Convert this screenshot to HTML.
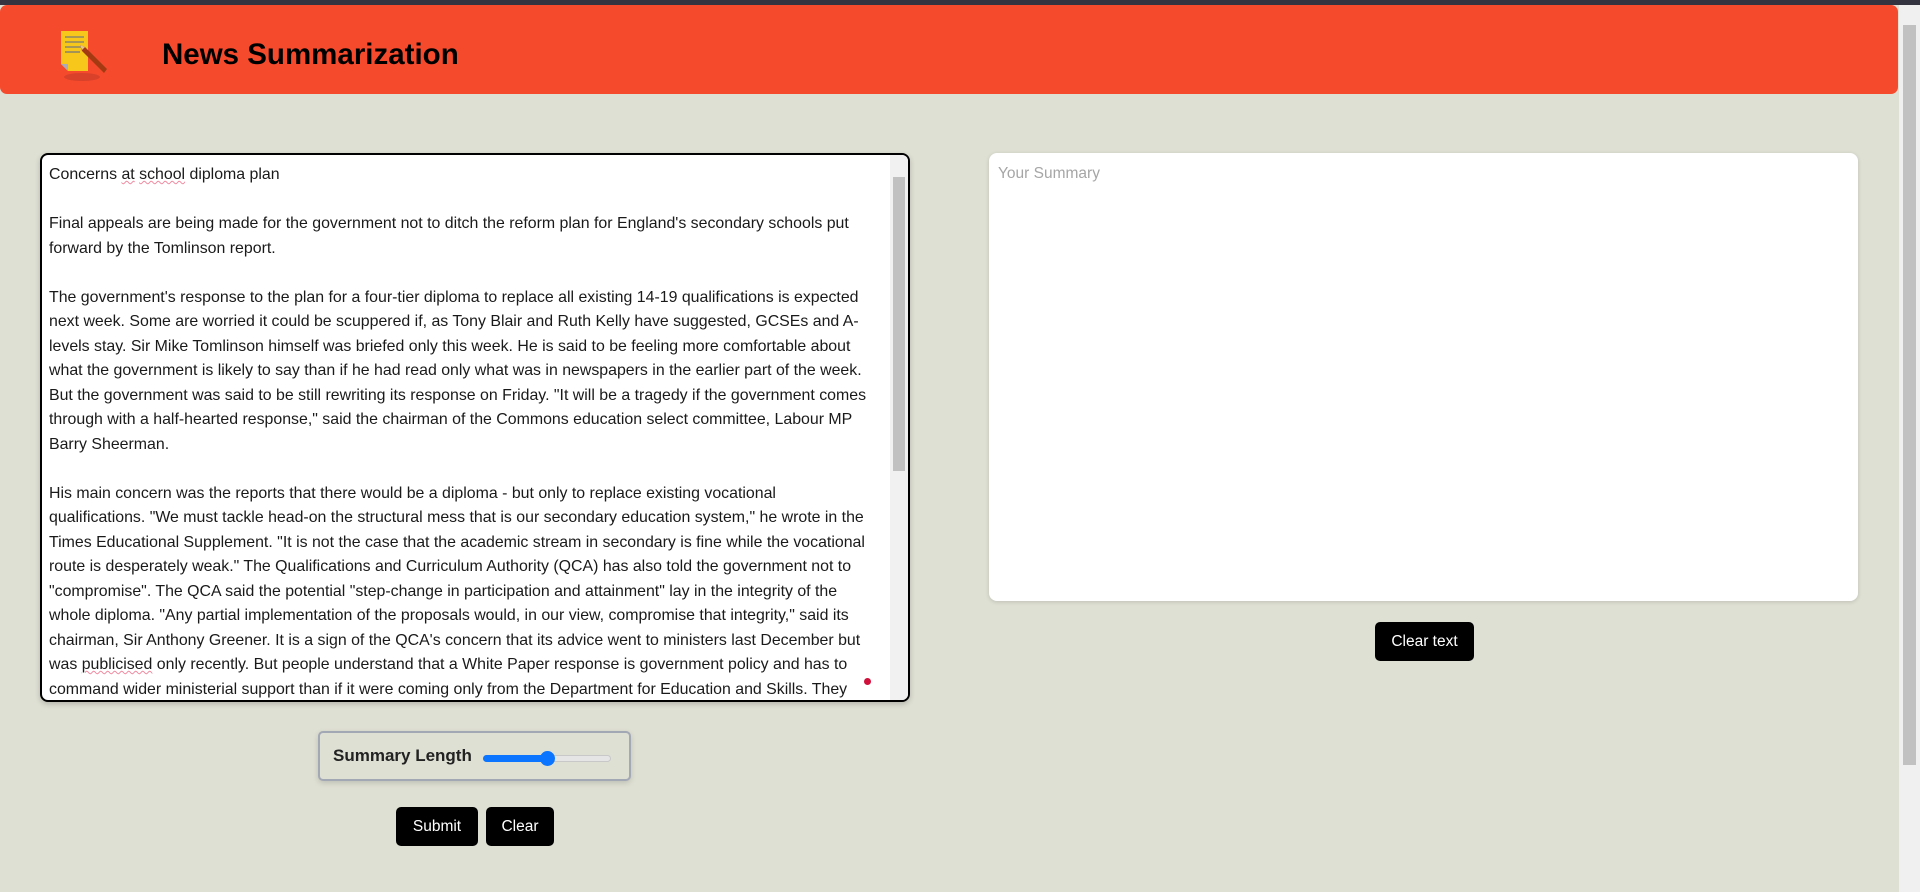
<!DOCTYPE html>
<html><head><meta charset="utf-8">
<style>
*{box-sizing:border-box;margin:0;padding:0}
html,body{width:1920px;height:892px;overflow:hidden;background:#dfe0d4;font-family:"Liberation Sans",sans-serif}
.topbar{position:absolute;left:0;top:0;width:1920px;height:5px;background:#33343f}
.header{position:absolute;left:0;top:5px;width:1898px;height:89px;background:#f64a2d;border-radius:7px}
.title{position:absolute;left:162px;top:33px;font-size:29.5px;font-weight:bold;color:#000}
.vs{position:absolute;right:0;top:5px;width:21px;height:887px;background:#f0f0f0}
.vs .th{position:absolute;left:4px;top:20px;width:13px;height:740px;background:#c1c1c1}
.ta{position:absolute;left:40px;top:153px;width:870px;height:549px;background:#fff;border:2px solid #000;border-radius:8px;overflow:hidden;box-shadow:0 2px 6px rgba(0,0,0,.2)}
.txt{position:absolute;left:7px;top:8px;font-size:15.9px;line-height:24.5px;color:#1a1a1a;white-space:pre}
.u{text-decoration:underline wavy #f08aa0;text-decoration-thickness:1px}
.tsb{position:absolute;right:0;top:0;width:18px;height:100%;background:#f1f1f1}
.tsb .th{position:absolute;left:3px;top:22px;width:12px;height:294px;background:#c1c1c1}
.sum{position:absolute;left:989px;top:153px;width:869px;height:448px;background:#fff;border-radius:8px;box-shadow:0 1px 4px rgba(0,0,0,.15)}
.sum span{position:absolute;left:9px;top:12px;color:#a6a6a6;font-size:15.5px}
.btn{position:absolute;background:#000;color:#fff;font-size:15.5px;border-radius:5px;text-align:center}
.len{position:absolute;left:318px;top:731px;width:313px;height:50px;border:2px solid #a3a8b5;border-radius:5px;background:#dfe0d4;box-shadow:0 2px 6px rgba(0,0,0,.15)}
.len span{position:absolute;left:13px;top:13px;font-size:17px;font-weight:bold;color:#222}
</style></head><body>
<div class="topbar"></div>
<div class="header">
<svg style="position:absolute;left:58px;top:20px" width="55" height="60" viewBox="0 0 55 60">
<ellipse cx="24" cy="52" rx="18" ry="4" fill="#d9412a"/>
<path d="M3 6h27v40H10L3 39z" fill="#f7c81b"/>
<path d="M3 39h7v7z" fill="#aab"/>
<g stroke="#777" stroke-width="1.3"><line x1="7" y1="12" x2="26" y2="12"/><line x1="7" y1="17" x2="26" y2="17"/><line x1="7" y1="22" x2="26" y2="22"/><line x1="7" y1="27" x2="22" y2="27"/></g>
<path d="M22 20l5 2 22 22-3 4-22-22z" fill="#a33a12"/>
<path d="M22 20l5 2-3 3z" fill="#e8c089"/>
</svg>
<div class="title">News Summarization</div>
</div>
<div class="vs"><div class="th"></div></div>

<div class="ta"><div class="txt">Concerns <span class="u">at</span> <span class="u">school</span> diploma plan

Final appeals are being made for the government not to ditch the reform plan for England's secondary schools put
forward by the Tomlinson report.

The government's response to the plan for a four-tier diploma to replace all existing 14-19 qualifications is expected
next week. Some are worried it could be scuppered if, as Tony Blair and Ruth Kelly have suggested, GCSEs and A-
levels stay. Sir Mike Tomlinson himself was briefed only this week. He is said to be feeling more comfortable about
what the government is likely to say than if he had read only what was in newspapers in the earlier part of the week.
But the government was said to be still rewriting its response on Friday. "It will be a tragedy if the government comes
through with a half-hearted response," said the chairman of the Commons education select committee, Labour MP
Barry Sheerman.

His main concern was the reports that there would be a diploma - but only to replace existing vocational
qualifications. "We must tackle head-on the structural mess that is our secondary education system," he wrote in the
Times Educational Supplement. "It is not the case that the academic stream in secondary is fine while the vocational
route is desperately weak." The Qualifications and Curriculum Authority (QCA) has also told the government not to
"compromise". The QCA said the potential "step-change in participation and attainment" lay in the integrity of the
whole diploma. "Any partial implementation of the proposals would, in our view, compromise that integrity," said its
chairman, Sir Anthony Greener. It is a sign of the QCA's concern that its advice went to ministers last December but
was <span class="u">publicised</span> only recently. But people understand that a White Paper response is government policy and has to
command wider ministerial support than if it were coming only from the Department for Education and Skills. They
may be content if it does not "close too many doors" in writing - whatever spin is put on it.</div>
<div style="position:absolute;left:822px;top:523px;width:7px;height:7px;border-radius:50%;background:#d0103a"></div>
<div class="tsb"><div class="th"></div></div></div>

<div class="sum"><span>Your Summary</span></div>
<div class="btn" style="left:1375px;top:622px;width:99px;height:39px;line-height:39px">Clear text</div>

<div class="len"><span>Summary Length</span>
<div style="position:absolute;left:163px;top:22px;width:128px;height:7px;border-radius:4px;background:#e5e5e5;border:1px solid #c8c8c8"></div>
<div style="position:absolute;left:163px;top:22px;width:66px;height:7px;border-radius:4px;background:#0b75ff"></div>
<div style="position:absolute;left:220px;top:18px;width:15px;height:15px;border-radius:50%;background:#0b75ff"></div>
</div>
<div class="btn" style="left:396px;top:807px;width:82px;height:39px;line-height:39px">Submit</div>
<div class="btn" style="left:486px;top:807px;width:68px;height:39px;line-height:39px">Clear</div>
</body></html>
